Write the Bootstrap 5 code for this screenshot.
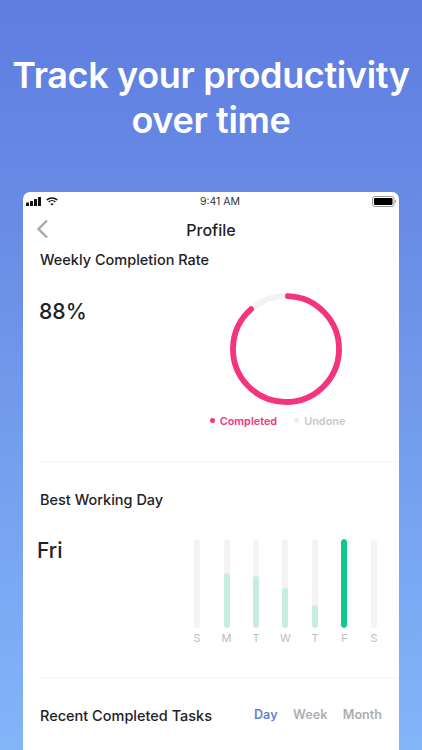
<!DOCTYPE html>
<html lang="en">
<head>
<meta charset="utf-8">
<title>Profile</title>
<link href="https://cdn.jsdelivr.net/npm/bootstrap@5.3.0/dist/css/bootstrap.min.css" rel="stylesheet">
<style>
html,body{height:750px;overflow:hidden}
body{font-family:Inter,"Liberation Sans",sans-serif;background:linear-gradient(180deg,#5f7de0 0%,#6c92e8 40%,#83b5f9 100%);color:#222226}
.shot{height:750px;overflow:hidden;padding:53px 23px 0}
.headline{color:#fff;font-size:36px;line-height:45px;font-weight:600;letter-spacing:-.35px;margin:0 -23px 49px;white-space:nowrap}
.phone{background:#fff;border-radius:7px 7px 0 0;height:600px;overflow:hidden}
.statusbar{height:19px;padding:0 3px;font-size:10.5px;color:#333}
.statusbar>.side{flex:1 1 0}
.clock{margin-left:18px}
.navrow{height:38px;position:relative;font-size:16px;font-weight:500}
.backicon{position:absolute;left:13px;top:8px}
.sect{padding:0 17px 0 17px}
.sect-title{font-size:14.5px;font-weight:500;line-height:20px;margin:1px 0 0}
.pct{font-size:21.2px;font-weight:500;line-height:26px;margin:28px 0 0 -1px}
.ringbox{width:200px;margin:21px -4px 0 0}
.legend{font-size:10.9px;font-weight:600;gap:17px;margin-top:7px;line-height:14px;margin-right:17px}
.dot{width:5px;height:5px;border-radius:50%;display:inline-block;margin-right:5px;vertical-align:2px}
.pinkc{color:#f5337e}.greyc{color:#c9c9cc}
.pinkb{background:#f5337e}.greyb{background:#ececee}
.rule{height:1px;background:#f6f6f7;margin-left:17px}
.rule-a{margin-top:33px}
.rule-b{margin-top:32px}
.day{font-size:21px;font-weight:500;line-height:26px;margin:28px 0 0 -3px}
.bars{width:183.6px;margin:29px 4.7px 0 0;justify-content:space-between}
.barcol{width:22px;display:flex;flex-direction:column;align-items:center;margin:0 -7.7px}
.track{width:6px;height:89px;border-radius:3px;background:#f4f4f5;position:relative;overflow:hidden}
.fill{position:absolute;left:0;right:0;bottom:0;border-radius:3px;background:#c8ecdf}
.fill.peak{background:#10c98a}
.barlab{font-size:11px;color:#bdbdc0;line-height:14px;margin-top:3px}
.sect-best{padding-top:27px}
.sect-recent{padding-top:27px}
.tabs{font-size:12.6px;font-weight:600;gap:15.5px;color:#aeaeb2}
.active-tab{color:#6483d4}
</style>
</head>
<body>
<div class="shot">
  <h1 class="headline text-center">Track your productivity<br>over time</h1>
  <div class="phone">
    <div class="statusbar d-flex align-items-center">
      <div class="side d-flex align-items-center gap-1">
        <svg width="16" height="9" viewBox="0 0 16 9" fill="#111"><rect x="0" y="5.5" width="3" height="3.5" rx=".6"/><rect x="4" y="4" width="3" height="5" rx=".6"/><rect x="8" y="2" width="3" height="7" rx=".6"/><rect x="12" y="0" width="3" height="9" rx=".6"/></svg>
        <svg width="12" height="9" viewBox="0 0 12 9" fill="none" stroke="#111" stroke-width="1.4"><path d="M.7 3.1a7.6 7.6 0 0 1 10.6 0"/><path d="M2.6 5a4.9 4.9 0 0 1 6.8 0"/><path d="M6 8.6 4.4 6.9a2.3 2.3 0 0 1 3.2 0z" fill="#111" stroke="none"/></svg>
      </div>
      <div class="clock text-center">9:41 AM</div>
      <div class="side d-flex justify-content-end">
        <svg width="24" height="11" viewBox="0 0 24 11"><rect x=".5" y=".5" width="21.5" height="10" rx="2.2" fill="none" stroke="#999"/><rect x="2" y="2" width="18.5" height="7" rx="1" fill="#000"/><rect x="22.8" y="4" width="1" height="3" fill="#999"/></svg>
      </div>
    </div>
    <div class="navrow d-flex align-items-center justify-content-center">
      <svg class="backicon" width="13" height="20" viewBox="0 0 13 20" fill="none" stroke="#a8a8a8" stroke-width="2.4"><path d="M11 1.5 2.5 10l8.5 8.5"/></svg>
      <span>Profile</span>
    </div>
    <section class="sect">
      <h2 class="sect-title">Weekly Completion Rate</h2>
      <div class="d-flex justify-content-between">
        <p class="pct">88%</p>
        <div class="ringbox d-flex flex-column align-items-center">
          <svg width="116" height="116" viewBox="0 0 116 116" fill="none" stroke-width="5.8" stroke-linecap="round">
            <circle cx="58" cy="58" r="53" stroke="#f3f3f4"/>
            <circle cx="58" cy="58" r="53" stroke="#f5337e" pathLength="100" stroke-dasharray="88 12" transform="rotate(-88 58 58)"/>
          </svg>
          <div class="legend d-flex">
            <span class="pinkc"><i class="dot pinkb"></i>Completed</span>
            <span class="greyc"><i class="dot greyb"></i>Undone</span>
          </div>
        </div>
      </div>
    </section>
    <div class="rule rule-a"></div>
    <section class="sect sect-best">
      <h2 class="sect-title">Best Working Day</h2>
      <div class="d-flex justify-content-between">
        <p class="day">Fri</p>
        <div class="bars d-flex">
          <div class="barcol"><div class="track"></div><span class="barlab">S</span></div>
          <div class="barcol"><div class="track"><div class="fill" style="height:55px"></div></div><span class="barlab">M</span></div>
          <div class="barcol"><div class="track"><div class="fill" style="height:52px"></div></div><span class="barlab">T</span></div>
          <div class="barcol"><div class="track"><div class="fill" style="height:40px"></div></div><span class="barlab">W</span></div>
          <div class="barcol"><div class="track"><div class="fill" style="height:23px"></div></div><span class="barlab">T</span></div>
          <div class="barcol"><div class="track"><div class="fill peak" style="height:89px"></div></div><span class="barlab">F</span></div>
          <div class="barcol"><div class="track"></div><span class="barlab">S</span></div>
        </div>
      </div>
    </section>
    <div class="rule rule-b"></div>
    <section class="sect sect-recent d-flex justify-content-between align-items-center">
      <h2 class="sect-title">Recent Completed Tasks</h2>
      <div class="tabs d-flex"><span class="active-tab">Day</span><span>Week</span><span>Month</span></div>
    </section>
  </div>
</div>
<script src="https://cdn.jsdelivr.net/npm/bootstrap@5.3.0/dist/js/bootstrap.bundle.min.js"></script>
</body>
</html>
